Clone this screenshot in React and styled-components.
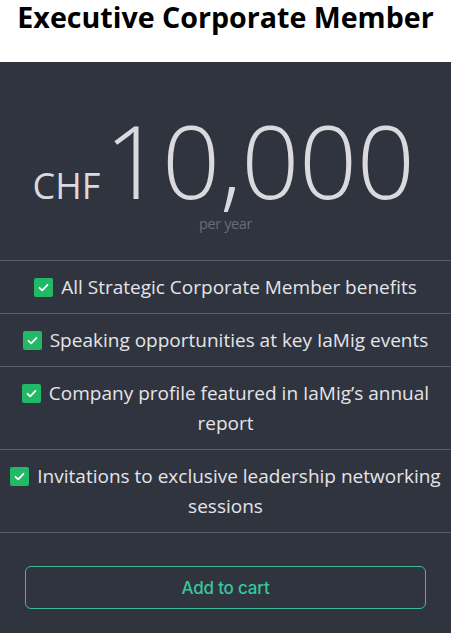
import React from 'react';
import styled, { createGlobalStyle } from 'styled-components';

const GlobalStyle = createGlobalStyle`
  html, body {
    margin: 0;
    padding: 0;
    background: #ffffff;
  }
  body {
    font-family: "Open Sans", "Noto Sans", sans-serif;
  }
`;

const Page = styled.main`
  width: 451px;
  height: 633px;
  display: flex;
  flex-direction: column;
  overflow: hidden;
`;

const Title = styled.h1`
  margin: 0;
  height: 62px;
  font-size: 28.6px;
  font-weight: 700;
  color: #000;
  text-align: center;
  line-height: 34px;
`;

const Card = styled.section`
  flex: 1;
  background: #30343f;
  display: flex;
  flex-direction: column;
`;

const PriceBlock = styled.div`
  height: 198px;
  display: flex;
  flex-direction: column;
  align-items: center;
  border-bottom: 1px solid #5b5f69;
`;

const PriceLine = styled.div`
  display: flex;
  align-items: baseline;
  color: #d9d9de;
  margin-top: 42px;
  height: 112px;
  margin-left: -4px;
`;

const Currency = styled.span`
  font-size: 36px;
  font-weight: 400;
  margin-right: 4px;
`;

const Amount = styled.span`
  font-size: 102px;
  font-weight: 300;
  line-height: 112px;
  letter-spacing: -0.5px;
`;

const Period = styled.span`
  font-size: 14.5px;
  color: #686c77;
  margin-top: -2px;
  letter-spacing: -0.4px;
`;

const Benefits = styled.ul`
  list-style: none;
  margin: 0;
  padding: 0;
`;

const Benefit = styled.li`
  padding: 11px 6px;
  border-bottom: 1px solid #5b5f69;
  text-align: center;
  font-size: 19px;
  line-height: 30px;
  color: #e4e4e8;
  letter-spacing: 0;
`;

const Check = styled.span`
  display: inline-block;
  width: 19px;
  height: 19px;
  border-radius: 2px;
  background: #21b866;
  vertical-align: -3px;
  margin-right: 8px;
  position: relative;

  svg {
    position: absolute;
    left: 3px;
    top: 3px;
  }
`;

const Footer = styled.div`
  padding: 33px 25px 0;
`;

const CartButton = styled.button`
  width: 100%;
  height: 43px;
  background: transparent;
  border: 1.5px solid #3bbd98;
  border-radius: 6px;
  color: #35c79c;
  font-family: Inter, "Open Sans", sans-serif;
  font-size: 17px;
  font-weight: 500;
  letter-spacing: -0.2px;
  cursor: pointer;
`;

const benefits = [
  'All Strategic Corporate Member benefits',
  'Speaking opportunities at key IaMig events',
  'Company profile featured in IaMig\u2019s annual report',
  'Invitations to exclusive leadership networking sessions',
];

function CheckBox() {
  return (
    <Check>
      <svg width="13" height="13" viewBox="0 0 13 13" fill="none">
        <path d="M2.5 6.8 L5.2 9.3 L10.5 3.8" stroke="#fff" strokeWidth="1.8" strokeLinecap="round" strokeLinejoin="round" />
      </svg>
    </Check>
  );
}

export default function App() {
  return (
    <Page>
      <GlobalStyle />
      <Title>Executive Corporate Member</Title>
      <Card>
        <PriceBlock>
          <PriceLine>
            <Currency>CHF</Currency>
            <Amount>10,000</Amount>
          </PriceLine>
          <Period>per year</Period>
        </PriceBlock>
        <Benefits>
          {benefits.map(text => (
            <Benefit key={text}>
              <CheckBox />
              {text}
            </Benefit>
          ))}
        </Benefits>
        <Footer>
          <CartButton>Add to cart</CartButton>
        </Footer>
      </Card>
    </Page>
  );
}
